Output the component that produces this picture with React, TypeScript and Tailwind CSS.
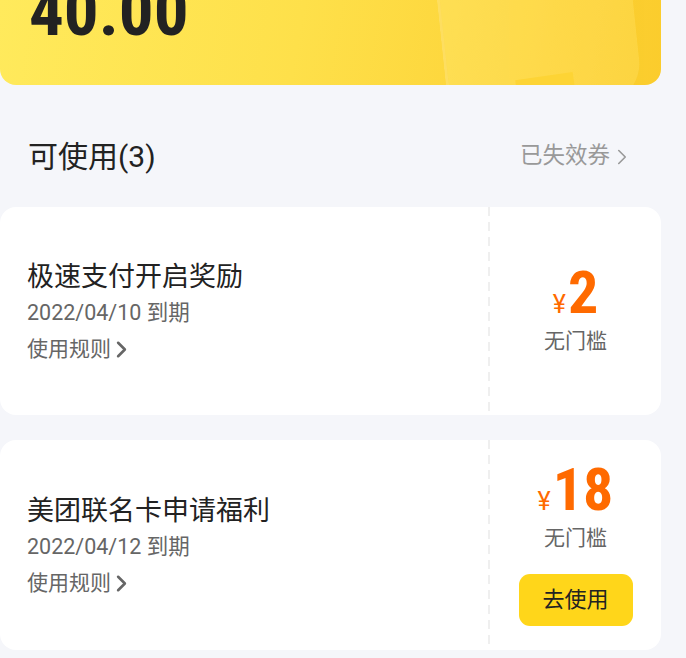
import React from "react";
import { ChevronRight } from "lucide-react";

const sans = "font-['Roboto','Noto_Sans_CJK_SC',sans-serif]";
const num = "font-['Liberation_Sans_Narrow','Roboto_Condensed','Roboto',sans-serif]";

function Coupon({
  title,
  date,
  amount,
  button,
  h,
}: {
  title: string;
  date: string;
  amount: string;
  button?: boolean;
  h: string;
}) {
  return (
    <div className={`flex ${h} rounded-[16px] bg-white`}>
      <div className="flex w-[488px] flex-col justify-center pl-[27px] pt-[3px]">
        <div className="text-[27px] leading-[36px] text-[#222]">{title}</div>
        <div className="text-[21.5px] leading-[36px] text-[#666]">{date}</div>
        <div className="flex items-center text-[21px] leading-[36px] text-[#666]">
          <span>使用规则</span>
          <ChevronRight size={27} strokeWidth={2.3} className="-ml-[3px] mt-[2px] text-[#666]" />
        </div>
      </div>
      <div className="w-[2px] bg-[repeating-linear-gradient(to_bottom,#efefef_0px,#efefef_9px,transparent_9px,transparent_15px)]" />
      <div className="flex flex-1 flex-col items-center justify-center">
        <div className="flex items-baseline text-[#ff6a00]">
          <span className="mr-[2px] text-[25px] leading-none">¥</span>
          <span className={`${num} text-[60px] font-bold leading-[50px]`}>{amount}</span>
        </div>
        <div className="mt-[9px] text-[21px] leading-[28px] text-[#666]">无门槛</div>
        {button && (
          <div className="mt-[22px] flex h-[52px] w-[114px] items-center justify-center rounded-[11px] bg-[#ffd61a] text-[22px] text-[#222]">
            去使用
          </div>
        )}
      </div>
    </div>
  );
}

export default function App() {
  return (
    <div className={`${sans} min-h-[658px] w-[686px] bg-[#f5f6fa] pr-[25px]`}>
      <div className="relative h-[85px] overflow-hidden rounded-b-[16px] bg-[linear-gradient(100deg,#ffea5c_0%,#fee04a_45%,#fdd53a_75%,#fbcc2c_100%)]">
        <div className="absolute left-[440px] top-[-60px] h-[170px] w-[195px] rotate-[-6deg] rounded-[40px] border-l-[3px] border-[#ffe680]/60 bg-[linear-gradient(100deg,#ffe15a,#fdd646)] opacity-80" />
        <div className="absolute left-[517px] top-[76px] h-[30px] w-[58px] rotate-[-8deg] bg-[#fdd435]" />
        <div className={`${num} relative -mt-[23px] pl-[29px] text-[69px] font-bold leading-[69px] text-[#222]`}>
          40.00
        </div>
      </div>

      <div className="flex h-[122px] items-center justify-between pl-[28px] pr-[26px] pt-[20px]">
        <div className="text-[30px] text-[#222]">可使用(3)</div>
        <div className="flex items-center text-[22.5px] text-[#999]">
          <span>已失效券</span>
          <ChevronRight size={26} strokeWidth={1.5} className="ml-[-1px] mt-[2px] text-[#999]" />
        </div>
      </div>

      <Coupon title="极速支付开启奖励" date="2022/04/10 到期" amount="2" h="h-[208px]" />
      <div className="h-[25px]" />
      <Coupon title="美团联名卡申请福利" date="2022/04/12 到期" amount="18" button h="h-[210px]" />
    </div>
  );
}
